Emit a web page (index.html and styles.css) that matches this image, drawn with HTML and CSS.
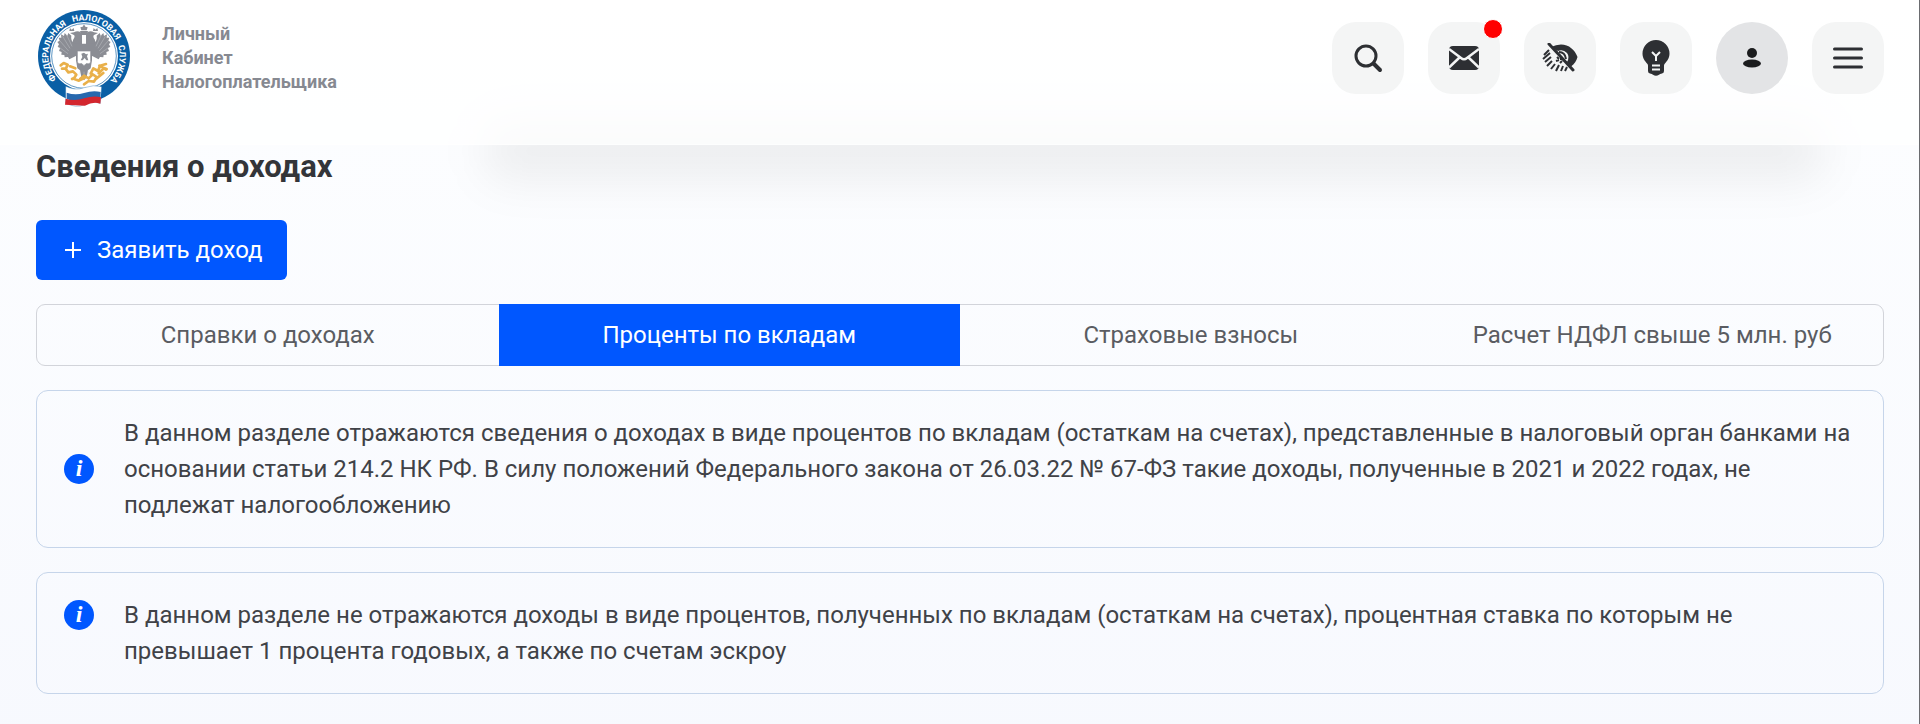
FILE: index.html
```
<!DOCTYPE html>
<html lang="ru">
<head>
  <meta charset="UTF-8" />
  <meta name="viewport" content="width=device-width, initial-scale=1.0"/>
  <title>Сведения о доходах</title>
  <link rel="stylesheet" href="styles.css">
</head>
<body>
  <header class="header">
    <a href="#" class="brand">
      <svg class="logo" viewBox="18 9 288 300" aria-hidden="true">
        <defs>
          <path id="ring" d="M80 222 A107 107 0 1 1 231 235"/>
        </defs>
        <circle cx="162" cy="153" r="138" fill="#0a5fa5"/>
        <circle cx="162" cy="153" r="102" fill="#fff"/>
        <circle cx="162" cy="153" r="97" fill="#fff" stroke="#0a5fa5" stroke-width="2"/>
        <text class="logo-text"><textPath href="#ring" startOffset="0">ФЕДЕРАЛЬНАЯ</textPath></text>
        <text class="logo-text"><textPath href="#ring" startOffset="208">НАЛОГОВАЯ</textPath></text>
        <text class="logo-text"><textPath href="#ring" startOffset="379">СЛУЖБА</textPath></text>
        <!-- eagle -->
        <g fill="#8b8d94">
          <path d="M162 58l4 7 7 2-3 9h-16l-3-9 7-2z"/>
          <path d="M150 78h24l-4 12h-16z"/>
          <path d="M156 88c-2-8-14-12-24-6l-12 2 10 5c6 2 4 8 0 14l-4 14 18 10 12-6z"/>
          <path d="M168 88c2-8 14-12 24-6l12 2-10 5c-6 2-4 8 0 14l4 14-18 10-12-6z"/>
          <path d="M120 69l5 5 6-5 2 9h-15zM191 69l5 5 6-5 2 9h-15z"/>
          <path d="M142 118c-14-2-20-12-18-26l-9-8-3 8-8-8-2 9-9-5 1 10-8 0 3 9-7 4 5 7-4 7 7 5-3 8 8 3-1 8 9 1 1 7 10-1 4 7 24-12z"/>
          <path d="M182 118c14-2 20-12 18-26l9-8 3 8 8-8 2 9 9-5-1 10 8 0-3 9 7 4-5 7 4 7-7 5 3 8-8 3 1 8-9 1-1 7-10-1-4 7-24-12z"/>
          <path d="M138 116h48v50l-4 24-8 6-4 20-8 10-8-10-4-20-8-6-4-24z"/>
        </g>
        <g fill="none" stroke="#dcdde0" stroke-width="1">
          <path d="M98 94l22 36M90 108l26 30M86 126l28 20M110 90l16 34M226 94l-22 36M234 108l-26 30M238 126l-28 20M214 90l-16 34"/>
          <path d="M150 196l-4 18M162 200v20M174 196l4 18"/>
        </g>
        <path d="M142 138h40v32q0 6-6 6h-8l-6 6-6-6h-8q-6 0-6-6z" fill="#fff" stroke="#8b8d94" stroke-width="2"/>
        <path d="M154 146l8-3 6 5 6-2-3 8 4 12h-6l-5-7-6 7h-6l5-10z" fill="#8b8d94"/>
        <!-- gold twigs -->
        <g fill="none" stroke="#e9b04a" stroke-width="8" stroke-linecap="round" stroke-linejoin="round">
          <path d="M92 181l9-7 12 5-5 11-12 1M106 190l9 12 14-3 10 10-8 12 16 6 16-8M120 184l16 6M126 222l8-4"/>
          <path d="M150 222l12-10 14 8 12-12 12 8-8 14-16-2-14 10M182 206l8-16 14 8 6-16 18-5M206 205l16-16 8 3M196 223l24-19M208 182l20 12"/>
        </g>
        <!-- flag ribbon -->
        <path d="M107 244q28 14 56 4t52-3l-4 50q-24-8-48 4t-56-5z" fill="#fff" stroke="#0a5fa5" stroke-width="1"/>
        <path d="M110 263q26 9 52 1t50-3l-1 18q-24-5-48 5t-53-2z" fill="#2768ae"/>
        <path d="M107 281q28 8 56-1t50-3l-2 19q-22-7-46 6-30-1-60-3z" fill="#d3262e"/>
      </svg>
      <span class="brand-name">Личный<br>Кабинет<br>Налогоплательщика</span>
    </a>

    <nav class="actions">
      <button class="icon-button" aria-label="Поиск">
        <svg width="30" height="30" viewBox="0 0 30 30" fill="none" stroke="#2d2f33" stroke-linecap="round">
          <circle cx="13" cy="13" r="10" stroke-width="3"/>
          <path d="M20.500 20.500l6.500 6.500" stroke-width="4"/>
        </svg>
      </button>
      <button class="icon-button" aria-label="Сообщения">
        <svg width="30" height="24" viewBox="0 0 30 24">
          <rect width="30" height="24" rx="4" fill="#2d2f33"/>
          <path d="M0 3l12 9q3 2.500 6 0L30 3M0 21.500l10.500-10M30 21.500l-10.500-10" fill="none" stroke="#f4f5f5" stroke-width="2.500"/>
        </svg>
        <span class="dot"></span>
      </button>
      <button class="icon-button" aria-label="Версия для слабовидящих">
        <svg width="36" height="30" viewBox="0 0 36 30">
          <path d="M9 4q5-2.500 10-2.500C27 1.500 33 7 35.500 14c-1 4-3 7-6.500 9.500L25 19q3-5 0-9-4-4-9-2z" fill="#2d2f33"/>
          <path d="M17 9q6 0 7 7" fill="none" stroke="#2d2f33" stroke-width="2"/>
          <g fill="none" stroke="#2d2f33" stroke-width="2">
            <path d="M7 7l-5 5M8 10l-7 6M9 14l-6 5M10 18l-5 5M13 21l-4 5M17 22l-3 6M21 23l-2 5M25 24l-2 4"/>
            <path d="M15 14l2 2M14 18l3-1M18 20l2-2M19 15v2"/>
          </g>
          <path d="M7 1l24 26" stroke="#2d2f33" stroke-width="3" stroke-linecap="round"/>
        </svg>
      </button>
      <button class="icon-button" aria-label="Подсказки">
        <svg width="28" height="36" viewBox="0 0 28 36">
          <path d="M14 0a13.500 13.500 0 0 1 13.500 13.500c0 5-2.500 7.500-5 10.500-.7 1-.5 2-.5 4v3q0 2-2 2.500-2 .3-3 1.200-3 2-6 0-1-.9-3-1.200-2-.5-2-2.500v-3c0-2 .2-3-.5-4-2.500-3-5-5.500-5-10.500A13.500 13.500 0 0 1 14 0z" fill="#2d2f33"/>
          <path d="M10 12l4 4 4-4M14 16v5M10 25.500h8M10 29.500h8" fill="none" stroke="#f4f5f5" stroke-width="2"/>
        </svg>
      </button>
      <button class="icon-button profile" aria-label="Профиль">
        <svg width="20" height="20" viewBox="0 0 20 20" fill="#1b1c1e">
          <circle cx="10" cy="5" r="5"/>
          <ellipse cx="10" cy="15.500" rx="9" ry="4"/>
        </svg>
      </button>
      <button class="icon-button" aria-label="Меню">
        <svg width="30" height="22" viewBox="0 0 30 22" stroke="#2d2f33" stroke-width="3" stroke-linecap="round">
          <path d="M1.500 2h27M1.500 11h27M1.500 20h27"/>
        </svg>
      </button>
    </nav>
  </header>

  <main class="content">
    <h1>Сведения о доходах</h1>

    <button class="add-button">
      <svg width="16" height="16" viewBox="0 0 16 16" stroke="currentColor" stroke-width="2"><path d="M8 0v16M0 8h16"/></svg>
      Заявить доход
    </button>

    <div class="tabs" role="tablist">
      <button class="tab" role="tab">Справки о доходах</button>
      <button class="tab active" role="tab" aria-selected="true">Проценты по вкладам</button>
      <button class="tab" role="tab">Страховые взносы</button>
      <button class="tab" role="tab">Расчет НДФЛ свыше 5 млн. руб</button>
    </div>

    <div class="notice">
      <span class="info">i</span>
      <p>В данном разделе отражаются сведения о доходах в виде процентов по вкладам (остаткам на счетах), представленные в налоговый орган банками на основании статьи 214.2 НК РФ. В силу положений Федерального закона от 26.03.22 № 67-ФЗ такие доходы, полученные в 2021 и 2022 годах, не подлежат налогообложению</p>
    </div>

    <div class="notice notice-top">
      <span class="info">i</span>
      <p>В данном разделе не отражаются доходы в виде процентов, полученных по вкладам (остаткам на счетах), процентная ставка по которым не превышает 1 процента годовых, а также по счетам эскроу</p>
    </div>
  </main>
</body>
</html>
```
FILE: styles.css
```
* {
  box-sizing: border-box;
}

body {
  margin: 0;
  min-height: 100vh;
  border-right: 1px solid #6b6c70;
  background: linear-gradient(#fdfeff, #f7f9fe);
  font-family: Roboto, sans-serif;
  font-size: 24px;
  line-height: 36px;
  color: #404247;
}

button {
  border: none;
  padding: 0;
  font: inherit;
  cursor: pointer;
}

.header {
  position: relative;
  z-index: 2;
  display: flex;
  justify-content: space-between;
  align-items: center;
  height: 145px;
  padding: 0 35px 28px 36px;
  background: rgba(255, 255, 255, 0.75);
  border-bottom: 1px solid rgba(255, 255, 255, 0.6);
}

.brand {
  display: flex;
  align-items: center;
  gap: 30px;
  text-decoration: none;
}

.logo {
  width: 96px;
  height: 100px;
}

.logo-text {
  font-size: 26px;
  font-weight: 700;
  fill: #fff;
}

.brand-name {
  font-size: 18px;
  line-height: 24px;
  font-weight: 700;
  color: #868991;
}

.actions {
  display: flex;
  gap: 24px;
}

.icon-button {
  position: relative;
  display: flex;
  align-items: center;
  justify-content: center;
  width: 72px;
  height: 72px;
  border-radius: 24px;
  background: #f4f5f5;
}

.profile {
  border-radius: 50%;
  background: #e3e4e6;
}

.dot {
  position: absolute;
  top: -3px;
  right: -3px;
  width: 20px;
  height: 20px;
  border: 1px solid #fff;
  border-radius: 50%;
  background: #f00;
}

.content {
  position: relative;
  padding: 0 35px 30px 36px;
}

/* soft shadow that drops out from under the header */
.content::before {
  content: "";
  position: absolute;
  top: -24px;
  left: 484px;
  right: 94px;
  height: 60px;
  border-radius: 24px;
  background: rgba(0, 0, 0, 0.06);
  filter: blur(22px);
}

h1 {
  margin: 0 0 32px;
  font-size: 31px;
  line-height: 43px;
  font-weight: 700;
  color: #333539;
}

.add-button {
  display: flex;
  align-items: center;
  gap: 16px;
  height: 60px;
  margin-bottom: 24px;
  padding: 0 24px 0 29px;
  border-radius: 6px;
  background: #0057ff;
  color: #fff;
}

.tabs {
  display: grid;
  grid-template-columns: repeat(4, 1fr);
  height: 62px;
  margin-bottom: 24px;
  border: 1px solid #d2d4da;
  border-radius: 9px;
}

.tab {
  background: none;
  color: #5a5c62;
}

.tab.active {
  margin: -1px 0;
  background: #0057ff;
  color: #fff;
}

.notice {
  display: flex;
  align-items: center;
  gap: 30px;
  margin-bottom: 24px;
  padding: 24px 27px;
  border: 1px solid #c6d5ea;
  border-radius: 12px;
}

.notice p {
  margin: 0;
}

.notice-top {
  align-items: flex-start;
}

.notice-top .info {
  margin-top: 3px;
}

.info {
  flex: none;
  width: 30px;
  height: 30px;
  border-radius: 50%;
  background: #0057ff;
  color: #fff;
  font: italic bold 24px/28px "Liberation Serif", serif;
  text-align: center;
}
```
